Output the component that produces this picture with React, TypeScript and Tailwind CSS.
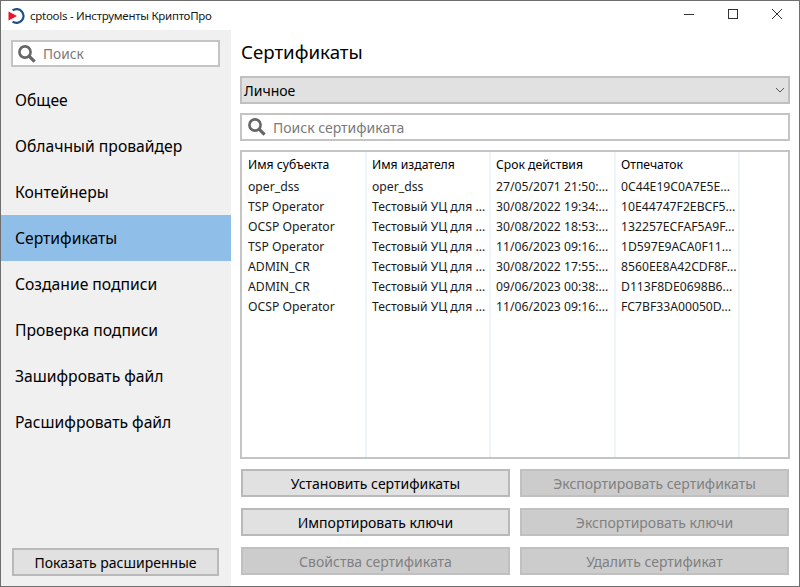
const NAV = [
  "Общее",
  "Облачный провайдер",
  "Контейнеры",
  "Сертификаты",
  "Создание подписи",
  "Проверка подписи",
  "Зашифровать файл",
  "Расшифровать файл",
];

const COLUMNS = ["Имя субъекта", "Имя издателя", "Срок действия", "Отпечаток"];

const ROWS = [
  ["oper_dss", "oper_dss", "27/05/2071 21:50:...", "0C44E19C0A7E5E..."],
  ["TSP Operator", "Тестовый УЦ для ...", "30/08/2022 19:34:...", "10E44747F2EBCF5..."],
  ["OCSP Operator", "Тестовый УЦ для ...", "30/08/2022 18:53:...", "132257ECFAF5A9F..."],
  ["TSP Operator", "Тестовый УЦ для ...", "11/06/2023 09:16:...", "1D597E9ACA0F11..."],
  ["ADMIN_CR", "Тестовый УЦ для ...", "30/08/2022 17:55:...", "8560EE8A42CDF8F..."],
  ["ADMIN_CR", "Тестовый УЦ для ...", "09/06/2023 00:38:...", "D113F8DE0698B6..."],
  ["OCSP Operator", "Тестовый УЦ для ...", "11/06/2023 09:16:...", "FC7BF33A00050D..."],
];

function SearchIcon() {
  return (
    <svg width="20" height="20" viewBox="0 0 20 20" fill="none" stroke="#666666" className="shrink-0">
      <circle cx="8" cy="8" r="5.6" strokeWidth="2.6" />
      <path d="M12.3 12.3L17.6 17.6" strokeWidth="3.2" />
    </svg>
  );
}

function Logo() {
  return (
    <svg width="17" height="16" viewBox="0 0 17 16" fill="none" className="shrink-0">
      <path d="M4.6 2.4A6.9 6.9 0 1 1 4.6 13.6" stroke="#1f4e8c" strokeWidth="2.2" />
      <path d="M0.5 3.6L9 8L0.5 12.4Z" fill="#e2182d" />
    </svg>
  );
}

function ActionButton({ label, disabled }: { label: string; disabled?: boolean }) {
  return (
    <button
      disabled={disabled}
      className={
        disabled
          ? "h-[28px] border-2 border-[#c0c0c0] bg-[#cccccc] text-[14px] text-[#808080]"
          : "h-[28px] border-2 border-[#b9b9b9] bg-[#e1e1e1] text-[14px] text-black"
      }
    >
      {label}
    </button>
  );
}

export default function App() {
  return (
    <div className="flex h-[587px] w-[800px] flex-col overflow-hidden border border-[#6e6e6e] bg-white font-['Noto_Sans',sans-serif] text-black">
      <header className="flex h-[29px] shrink-0 items-center pl-[7px]">
        <Logo />
        <span className="ml-[5px] text-[11.5px] tracking-[-0.27px] text-[#1a1a1a]">cptools - Инструменты КриптоПро</span>
        <div className="ml-auto flex items-start self-start">
          <svg width="44" height="29" viewBox="0 0 44 29" stroke="#333333" fill="none">
            <path d="M17 13.5H27" />
          </svg>
          <svg width="44" height="29" viewBox="0 0 44 29" stroke="#333333" fill="none">
            <rect x="17.5" y="8.5" width="9" height="9" />
          </svg>
          <svg width="44" height="29" viewBox="0 0 44 29" stroke="#333333" fill="none">
            <path d="M17 8L27 18M27 8L17 18" />
          </svg>
        </div>
      </header>

      <div className="flex min-h-0 flex-1">
        <aside className="flex w-[230px] shrink-0 flex-col bg-[#f0f0f0] pb-[10px] pt-[10px]">
          <div className="ml-[10px] mr-[11px] flex h-[27px] items-center gap-[6px] border-2 border-[#c4c4c4] bg-white pl-[4px]">
            <SearchIcon />
            <span className="pt-[1px] text-[13.7px] text-[#7a7a7a]">Поиск</span>
          </div>
          <nav className="mt-[10px] flex flex-col">
            {NAV.map((item) => (
              <div
                key={item}
                className={
                  item === "Сертификаты"
                    ? "flex h-[46px] items-center bg-[#8fbfe8] pl-[14px] text-[15.7px] leading-[23px]"
                    : "flex h-[46px] items-center pl-[14px] text-[15.7px] leading-[23px]"
                }
              >
                {item}
              </div>
            ))}
          </nav>
          <button className="ml-[11px] mr-[12px] mt-auto h-[28px] border-2 border-[#b9b9b9] bg-[#e1e1e1] text-[14px]">
            Показать расширенные
          </button>
        </aside>

        <main className="flex min-w-0 flex-1 flex-col pb-[10px] pl-[9px] pr-[9px] pt-[8px]">
          <h1 className="h-[28px] pl-[1px] text-[18.7px] leading-[28px]">Сертификаты</h1>
          <div className="mt-[10px] flex h-[28px] items-center justify-between border-2 border-[#c0c0c0] bg-[#e1e1e1] pl-[2px] pr-[3px] text-[14px]">
            <span>Личное</span>
            <svg width="10" height="6" viewBox="0 0 10 6" fill="none" stroke="#555555">
              <path d="M1 1L5 5L9 1" />
            </svg>
          </div>
          <div className="mt-[9px] flex h-[28px] items-center gap-[6px] border-2 border-[#c4c4c4] bg-white pl-[5px] text-[14px] text-[#7a7a7a]">
            <SearchIcon />
            <span>Поиск сертификата</span>
          </div>
          <div className="mt-[9px] flex h-[309px] flex-col overflow-hidden border-2 border-[#c4c4c4] bg-white text-[12.2px]">
            <div className="grid h-full grid-cols-[125px_124px_125px_124px_1fr]">
              {COLUMNS.map((col, i) => (
                <div
                  key={col}
                  className={
                    i === 0
                      ? "flex flex-col overflow-hidden border-r-2 border-[#eef4fb] pl-[6px] pt-[1px]"
                      : "flex flex-col overflow-hidden border-r-2 border-[#eef4fb] pl-[5px] pt-[1px]"
                  }
                >
                  <div className="flex h-[24px] shrink-0 items-center whitespace-nowrap">{col}</div>
                  {ROWS.map((row) => (
                    <div key={row[0] + row[2]} className="flex h-[20px] shrink-0 items-center whitespace-nowrap text-[#1a1a1a]">
                      {row[i]}
                    </div>
                  ))}
                </div>
              ))}
              <div />
            </div>
          </div>
          <div className="mx-[1px] mt-[10px] grid grid-cols-2 gap-x-[10px] gap-y-[11px]">
            <ActionButton label="Установить сертификаты" />
            <ActionButton label="Экспортировать сертификаты" disabled />
            <ActionButton label="Импортировать ключи" />
            <ActionButton label="Экспортировать ключи" disabled />
            <ActionButton label="Свойства сертификата" disabled />
            <ActionButton label="Удалить сертификат" disabled />
          </div>
        </main>
      </div>
    </div>
  );
}
